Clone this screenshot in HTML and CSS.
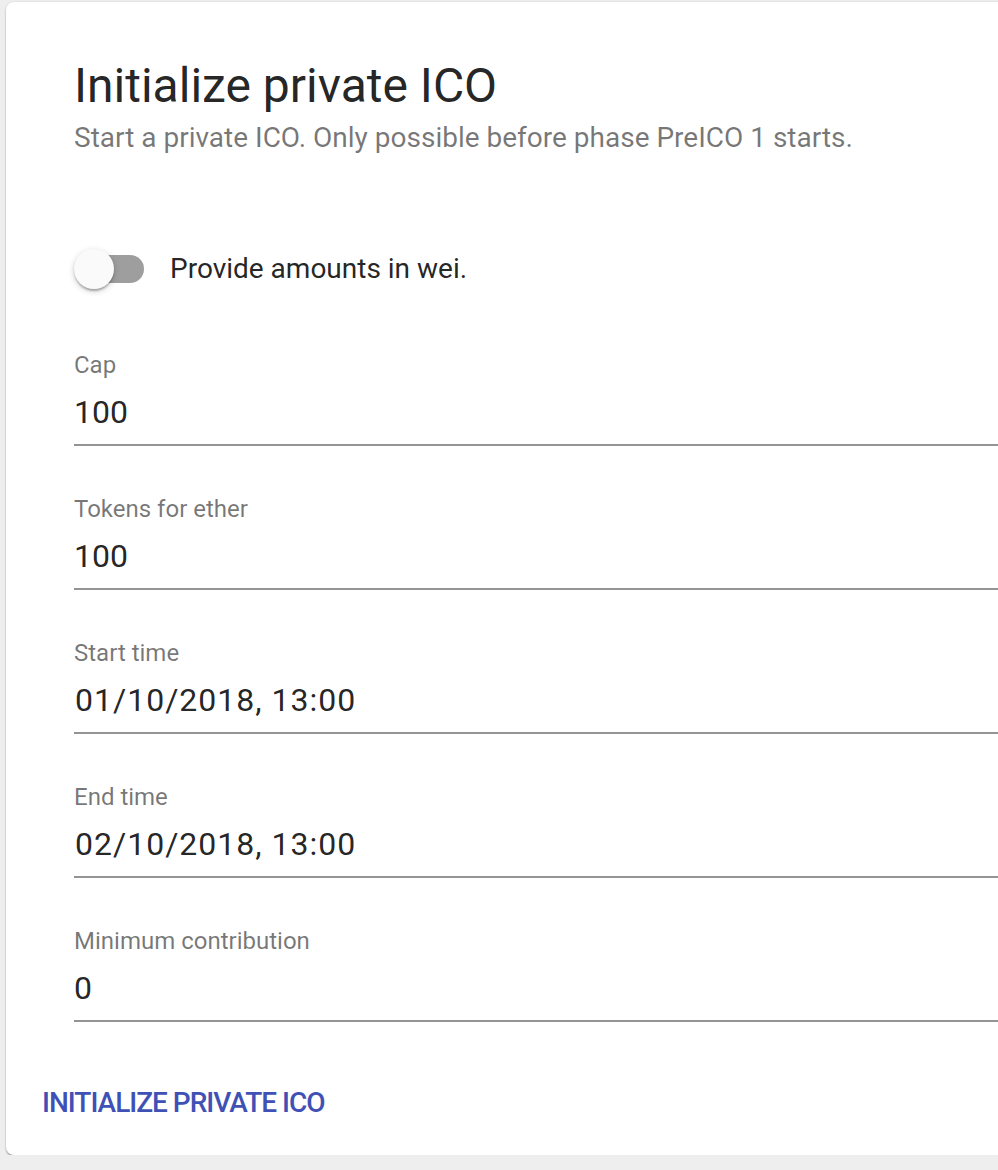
FILE: index.html
```html
<!DOCTYPE html>
<html>
<head>
<meta charset="utf-8">
<link rel="stylesheet" href="styles.css">
</head>
<body>
<div class="page">
  <div class="card">
    <div class="content">
      <h1 class="title">Initialize private ICO</h1>
      <p class="subtitle">Start a private ICO. Only possible before phase PreICO 1 starts.</p>
      <label class="toggle-row">
        <span class="switch"><span class="track"></span><span class="thumb"></span></span>
        <span class="toggle-label">Provide amounts in wei.</span>
      </label>
      <div class="field">
        <div class="field-label">Cap</div>
        <div class="field-input"><input type="text" value="100"></div>
      </div>
      <div class="field">
        <div class="field-label">Tokens for ether</div>
        <div class="field-input"><input type="text" value="100"></div>
      </div>
      <div class="field">
        <div class="field-label">Start time</div>
        <div class="field-input"><input class="date" type="text" value="01/10/2018, 13:00"></div>
      </div>
      <div class="field">
        <div class="field-label">End time</div>
        <div class="field-input"><input class="date" type="text" value="02/10/2018, 13:00"></div>
      </div>
      <div class="field">
        <div class="field-label">Minimum contribution</div>
        <div class="field-input"><input type="text" value="0"></div>
      </div>
    </div>
    <div class="actions">
      <button class="btn">Initialize private ICO</button>
    </div>
  </div>
</div>
</body>
</html>
```

FILE: styles.css
```css
html, body {
  margin: 0;
  padding: 0;
  background: #eeeeee;
  overflow: hidden;
  font-family: Roboto, "Liberation Sans", Arial, sans-serif;
}

.page {
  padding: 2px 0 0 6px;
  width: 1300px;
}

.card {
  width: 1200px;
  height: 1153px;
  background: #ffffff;
  border-radius: 8px;
  box-shadow: 0 2px 2px rgba(0,0,0,0.24), 0 0 2px rgba(0,0,0,0.14), 0 3px 1px -2px rgba(0,0,0,0.12);
  display: flex;
  flex-direction: column;
}

.content {
  padding: 56px 0 0 68px;
  display: flex;
  flex-direction: column;
}

.title {
  margin: 0;
  font-size: 48px;
  line-height: 56px;
  font-weight: 400;
  color: rgba(0,0,0,0.87);
}

.subtitle {
  margin: 8px 0 0;
  font-size: 28px;
  line-height: 32px;
  font-weight: 400;
  color: rgba(0,0,0,0.54);
}

.toggle-row {
  margin-top: 91px;
  height: 48px;
  display: flex;
  align-items: center;
}

.switch {
  position: relative;
  width: 72px;
  height: 44px;
  flex: none;
  display: flex;
  align-items: center;
}

.track {
  margin-left: 2px;
  width: 68px;
  height: 28px;
  border-radius: 14px;
  background: #9e9e9e;
}

.thumb {
  position: absolute;
  left: 0;
  top: 2px;
  width: 40px;
  height: 40px;
  border-radius: 50%;
  background: #fafafa;
  box-shadow: 0 2px 6px rgba(0,0,0,0.2), 0 2px 2px rgba(0,0,0,0.14), 0 4px 2px -2px rgba(0,0,0,0.12);
}

.toggle-label {
  margin-left: 24px;
  font-size: 28px;
  line-height: 32px;
  color: rgba(0,0,0,0.87);
}

.field {
  display: flex;
  flex-direction: column;
  margin-top: 49px;
}

.toggle-row + .field {
  margin-top: 58px;
}

.field-label {
  font-size: 24px;
  line-height: 28px;
  color: rgba(0,0,0,0.54);
}

.field-input {
  margin-top: 14px;
  padding-bottom: 13px;
  border-bottom: 2px solid rgba(0,0,0,0.42);
}

.field-input input {
  display: block;
  width: 100%;
  box-sizing: border-box;
  border: none;
  outline: none;
  padding: 0;
  margin: 0;
  background: transparent;
  font-family: Roboto, "Liberation Sans", Arial, sans-serif;
  font-size: 32px;
  line-height: 38px;
  height: 38px;
  color: rgba(0,0,0,0.87);
}

.field-input input.date {
  padding-left: 1px;
  letter-spacing: 1px;
}

.actions {
  padding: 0 0 0 8px;
  margin-top: 57px;
  display: flex;
}

.btn {
  border: none;
  background: transparent;
  padding: 8px 28px;
  font-family: Roboto, "Liberation Sans", Arial, sans-serif;
  font-size: 28px;
  line-height: 32px;
  font-weight: 500;
  letter-spacing: -1px;
  text-transform: uppercase;
  color: #3f51b5;
  cursor: pointer;
}
```
